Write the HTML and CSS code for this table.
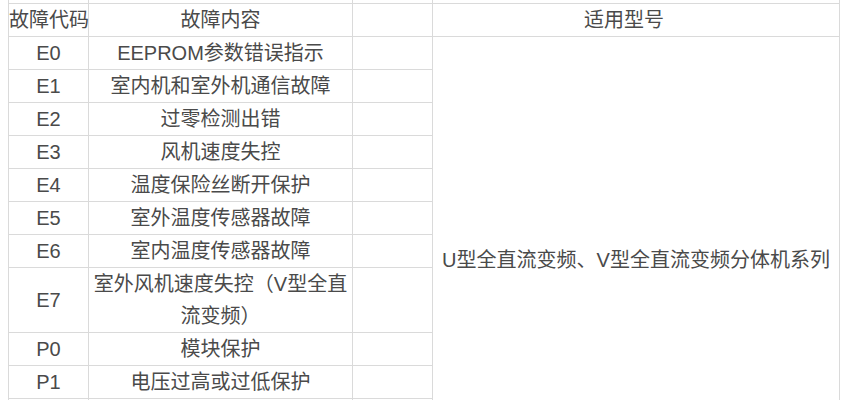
FILE: index.html
```html
<!DOCTYPE html>
<html lang="zh-CN">
<head>
<meta charset="utf-8">
<title>故障代码</title>
<link rel="stylesheet" href="styles.css">
</head>
<body>
<table class="codes">
  <colgroup>
    <col class="c-code">
    <col class="c-desc">
    <col class="c-empty">
    <col class="c-model">
  </colgroup>
  <tr class="stub"><td></td><td></td><td></td><td></td></tr>
  <tr class="head">
    <td>故障代码</td>
    <td>故障内容</td>
    <td></td>
    <td class="head-model">适用型号</td>
  </tr>
  <tr><td>E0</td><td>EEPROM参数错误指示</td><td></td><td class="model" rowspan="13">U型全直流变频、V型全直流变频分体机系列</td></tr>
  <tr><td>E1</td><td>室内机和室外机通信故障</td><td></td></tr>
  <tr><td>E2</td><td>过零检测出错</td><td></td></tr>
  <tr><td>E3</td><td>风机速度失控</td><td></td></tr>
  <tr><td>E4</td><td>温度保险丝断开保护</td><td></td></tr>
  <tr><td>E5</td><td>室外温度传感器故障</td><td></td></tr>
  <tr><td>E6</td><td>室内温度传感器故障</td><td></td></tr>
  <tr><td>E7</td><td>室外风机速度失控（V型全直流变频）</td><td></td></tr>
  <tr><td>P0</td><td>模块保护</td><td></td></tr>
  <tr><td>P1</td><td>电压过高或过低保护</td><td></td></tr>
  <tr class="blank"><td></td><td></td><td></td></tr>
  <tr class="blank"><td></td><td></td><td></td></tr>
  <tr class="blank"><td></td><td></td><td></td></tr>
</table>
</body>
</html>
```
FILE: styles.css
```css
html, body {
  margin: 0;
  padding: 0;
  background: #ffffff;
  overflow: hidden;
}

body {
  height: 400px;
}

.codes {
  margin-left: 8px;
  border-collapse: collapse;
  table-layout: fixed;
  width: 831px;
  font-family: "Liberation Sans", "Noto Sans CJK SC", sans-serif;
  font-size: 20px;
  color: #4a4a4a;
}

.c-code { width: 80px; }
.c-desc { width: 264px; }
.c-empty { width: 80px; }
.c-model { width: 407px; }

.codes td {
  border: 1px solid #dadada;
  text-align: center;
  vertical-align: middle;
  line-height: 32px;
  padding: 0 2px;
}

.codes .head td:first-child {
  padding: 0;
  white-space: nowrap;
}

.codes .stub td {
  border-top: 0;
  height: 3px;
  line-height: 0;
  padding: 0;
}

.codes .head-model {
  padding-right: 26px;
}

.codes .model {
  padding: 0 4px;
}

.codes .blank td {
  height: 27px;
  line-height: 27px;
}
```
